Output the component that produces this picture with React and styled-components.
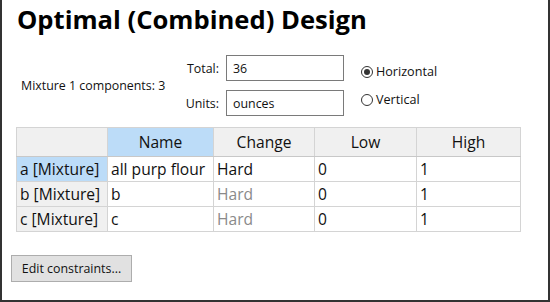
import React from "react";
import styled, { createGlobalStyle } from "styled-components";

const GlobalStyle = createGlobalStyle`
  html, body {
    margin: 0;
    padding: 0;
    background: #ffffff;
  }
  body {
    font-family: "Open Sans", "Noto Sans", sans-serif;
    color: #111;
  }
`;

const Frame = styled.div`
  box-sizing: border-box;
  width: 550px;
  height: 302px;
  border: 2px solid #333333;
  border-top: none;
  background: #fff;
  overflow: hidden;
  display: flex;
  flex-direction: column;
`;

const Title = styled.h1`
  margin: 0;
  padding: 3px 0 0 15px;
  font-size: 25.6px;
  font-weight: 700;
  line-height: 34px;
  color: #000;
`;

const FormRow = styled.div`
  display: flex;
  align-items: center;
  padding: 18px 0 0 19px;
`;

const Mixture = styled.div`
  font-size: 12.4px;
  width: 160px;
`;

const Fields = styled.div`
  display: grid;
  grid-template-columns: 38px 118px;
  column-gap: 7px;
  row-gap: 9px;
  align-items: center;
`;

const Label = styled.label`
  font-size: 12.4px;
  text-align: right;
`;

const TextBox = styled.div`
  box-sizing: border-box;
  height: 26px;
  border: 1px solid #7a7a7a;
  padding: 0 6px;
  font-size: 12.4px;
  display: flex;
  align-items: center;
  background: #fff;
`;

const Radios = styled.div`
  display: flex;
  flex-direction: column;
  gap: 11px;
  margin-left: 17px;
`;

const Radio = styled.div`
  display: flex;
  align-items: center;
  gap: 3px;
  font-size: 12.6px;
  line-height: 17px;
`;

const Dot = styled.span`
  box-sizing: border-box;
  width: 12px;
  height: 12px;
  border-radius: 50%;
  border: 1px solid #333;
  display: flex;
  align-items: center;
  justify-content: center;
  &::after {
    content: "";
    width: 6px;
    height: 6px;
    border-radius: 50%;
    background: ${({ $on }) => ($on ? "#333" : "transparent")};
  }
`;

const Table = styled.table`
  margin: 11px 0 0 14px;
  border-collapse: collapse;
  table-layout: fixed;
  width: 504px;
  font-size: 15.6px;
`;

const Head = styled.th`
  height: 28px;
  padding: 0;
  font-weight: 400;
  text-align: center;
  background: ${({ $sel }) => ($sel ? "#bcdcf8" : "#f0f0f0")};
  border: 1px solid #d4d4d4;
  border-bottom-color: #c8c8c8;
`;

const RowHead = styled.th`
  height: 24px;
  padding: 0 0 0 3px;
  font-weight: 400;
  text-align: left;
  background: ${({ $sel }) => ($sel ? "#bcdcf8" : "#f0f0f0")};
  border: 1px solid #d4d4d4;
  white-space: nowrap;
  overflow: hidden;
`;

const Cell = styled.td`
  height: 24px;
  padding: 0 0 0 3px;
  border: 1px solid #d4d4d4;
  color: ${({ $dim }) => ($dim ? "#8a8a8a" : "#111")};
  white-space: nowrap;
  overflow: hidden;
`;

const Button = styled.button`
  margin: 23px 0 0 9px;
  align-self: flex-start;
  box-sizing: border-box;
  width: 121px;
  height: 27px;
  background: #e1e1e1;
  border: 1px solid #adadad;
  font-family: inherit;
  font-size: 12.4px;
  color: #111;
  padding: 0;
`;

const rows = [
  { key: "a [Mixture]", name: "all purp flour", dim: false, sel: true },
  { key: "b [Mixture]", name: "b", dim: true },
  { key: "c [Mixture]", name: "c", dim: true },
];

export default function App() {
  return (
    <>
      <GlobalStyle />
      <Frame>
        <Title>Optimal (Combined) Design</Title>
        <FormRow>
          <Mixture>Mixture 1 components: 3</Mixture>
          <Fields>
            <Label>Total:</Label>
            <TextBox>36</TextBox>
            <Label>Units:</Label>
            <TextBox>ounces</TextBox>
          </Fields>
          <Radios>
            <Radio>
              <Dot $on />
              Horizontal
            </Radio>
            <Radio>
              <Dot />
              Vertical
            </Radio>
          </Radios>
        </FormRow>
        <Table>
          <colgroup>
            <col style={{ width: 91 }} />
            <col style={{ width: 106 }} />
            <col style={{ width: 101 }} />
            <col style={{ width: 102 }} />
            <col style={{ width: 104 }} />
          </colgroup>
          <thead>
            <tr>
              <Head />
              <Head $sel>Name</Head>
              <Head>Change</Head>
              <Head>Low</Head>
              <Head>High</Head>
            </tr>
          </thead>
          <tbody>
            {rows.map((r) => (
              <tr key={r.key}>
                <RowHead $sel={r.sel}>{r.key}</RowHead>
                <Cell>{r.name}</Cell>
                <Cell $dim={r.dim}>Hard</Cell>
                <Cell>0</Cell>
                <Cell>1</Cell>
              </tr>
            ))}
          </tbody>
        </Table>
        <Button>Edit constraints...</Button>
      </Frame>
    </>
  );
}
